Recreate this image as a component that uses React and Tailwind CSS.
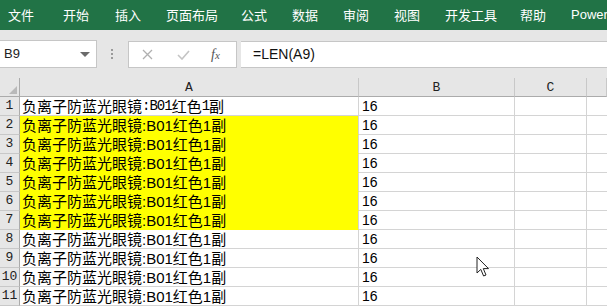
import React from 'react'

const tabs = [
  ['文件', 'w-[55px]'],
  ['开始', 'w-[52px]'],
  ['插入', 'w-[51px]'],
  ['页面布局', 'w-[75px]'],
  ['公式', 'w-[51px]'],
  ['数据', 'w-[51px]'],
  ['审阅', 'w-[51px]'],
  ['视图', 'w-[51px]'],
  ['开发工具', 'w-[75px]'],
  ['帮助', 'w-[51px]'],
  ['Power', 'w-[40px]'],
]

function Cursor() {
  return (
    <svg className="absolute left-[476px] top-[256px]" width="14" height="22" viewBox="0 0 14 22">
      <path d="M1 1 L1 17 L4.8 13.4 L7.6 20 L10 19 L7.3 12.6 L12.5 12.6 Z" fill="white" stroke="#222" strokeWidth="1" strokeLinejoin="round" />
    </svg>
  )
}

// row 1 uses a SimSun-like look: half-width latin
function FirstRowText() {
  const mono = { fontFamily: '"Liberation Mono", monospace', fontSize: '14px', letterSpacing: '-1px' }
  return (
    <>
      负离子防蓝光眼镜<span style={mono}>:B01</span>红色<span style={mono}>1</span>副
    </>
  )
}

export default function App() {
  const rows = Array.from({ length: 11 }, (_, i) => i + 1)

  return (
    <div className="relative w-[607px] h-[307px] overflow-hidden bg-white" style={{ fontFamily: '"Noto Sans CJK SC", sans-serif' }}>
      {/* ribbon tabs */}
      <div className="h-[30px] bg-[#217346] flex items-center pl-[8px] text-white text-[13px] whitespace-nowrap overflow-hidden">
        {tabs.map(([t, w]) => (
          <span key={t} className={'shrink-0 ' + w} style={t === 'Power' ? { fontFamily: '"Liberation Sans", sans-serif' } : undefined}>{t}</span>
        ))}
      </div>

      {/* formula bar */}
      <div className="h-[48px] bg-[#e6e6e6] flex items-start pt-[10px]">
        <div className="w-[97px] h-[28px] bg-white border border-[#c6c6c6] border-l-0 flex items-center justify-between pl-[4px] pr-[6px]">
          <span className="text-[13px] text-[#222]" style={{ fontFamily: '"Liberation Sans", sans-serif' }}>B9</span>
          <span className="w-0 h-0 border-l-[5px] border-r-[5px] border-t-[5px] border-l-transparent border-r-transparent border-t-[#6b6b6b]" />
        </div>
        <div className="w-[31px] h-[28px] flex flex-col items-center justify-center gap-[2px] pr-[2px]">
          <span className="w-[2px] h-[2px] bg-[#9a9a9a]" />
          <span className="w-[2px] h-[2px] bg-[#9a9a9a]" />
          <span className="w-[2px] h-[2px] bg-[#9a9a9a]" />
        </div>
        <div className="w-[109px] h-[27px] mt-[1px] bg-white border border-[#c6c6c6] flex items-center">
          <svg className="ml-[13px]" width="11" height="11" viewBox="0 0 11 11">
            <path d="M1 1 L10 10 M10 1 L1 10" stroke="#b0b0b0" strokeWidth="1.3" />
          </svg>
          <svg className="ml-[24px]" width="13" height="10" viewBox="0 0 13 10">
            <path d="M1 5 L5 9 L12 1" stroke="#c4c4c4" strokeWidth="1.6" fill="none" />
          </svg>
          <span className="ml-[21px] text-[14px] italic text-[#555]" style={{ fontFamily: '"Liberation Serif", serif' }}>f<span className="text-[11px]">x</span></span>
        </div>
        <div className="ml-[4px] flex-1 h-[27px] mt-[1px] bg-white border-y border-[#c6c6c6] flex items-center pl-[12px]">
          <span className="text-[14px] text-[#111]" style={{ fontFamily: '"Liberation Sans", sans-serif' }}>=LEN(A9)</span>
        </div>
      </div>

      {/* sheet */}
      <div className="grid grid-cols-[20px_339px_156px_72px_1fr]">
        {/* header row */}
        <div className="h-[19px] bg-[#e6e6e6] border-b border-r border-[#ababab] relative">
          <span className="absolute right-[2px] bottom-[2px] w-0 h-0" style={{ borderBottom: '8px solid #b9b9b9', borderLeft: '8px solid transparent' }} />
        </div>
        {['A', 'B', 'C', ''].map((c) => (
          <div key={c || 'D'} className="h-[19px] bg-[#e6e6e6] border-b border-b-[#ababab] border-r border-r-[#c8c8c8] flex items-center justify-center text-[13px] text-[#222] pt-[1px]" style={{ fontFamily: '"Liberation Mono", monospace' }}>
            {c}
          </div>
        ))}

        {rows.map((r) => {
          const yellow = r >= 2 && r <= 7
          return (
            <React.Fragment key={r}>
              <div className="h-[19px] bg-[#e6e6e6] border-b border-b-[#c8c8c8] border-r border-r-[#ababab] flex items-center justify-center text-[13px] text-[#222]" style={{ fontFamily: '"Liberation Mono", monospace' }}>
                {r}
              </div>
              <div
                className={
                  'h-[19px] border-r border-r-[#d4d4d4] flex items-center pl-[2px] text-[15px] text-black whitespace-nowrap leading-none ' +
                  (yellow ? 'bg-[#ffff00] border-b border-b-[#ffff00]' : 'bg-white border-b border-b-[#d4d4d4]')
                }
                style={{ fontFamily: '"Liberation Sans", "Noto Sans CJK SC", sans-serif' }}
              >
                {r === 1 ? <FirstRowText /> : '负离子防蓝光眼镜:B01红色1副'}
              </div>
              <div className="h-[19px] border-r border-b border-[#d4d4d4] flex items-center pl-[3px] text-[14px] text-black leading-none" style={{ fontFamily: '"Liberation Sans", sans-serif' }}>
                16
              </div>
              <div className="h-[19px] border-r border-b border-[#d4d4d4]" />
              <div className="h-[19px] border-b border-[#d4d4d4]" />
            </React.Fragment>
          )
        })}
      </div>

      <Cursor />
    </div>
  )
}
